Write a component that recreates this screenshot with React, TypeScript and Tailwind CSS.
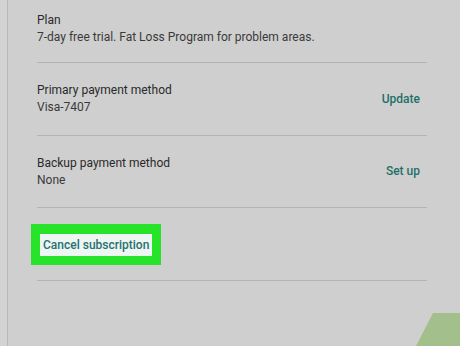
import React from "react";

function Row({
  label,
  value,
  action,
  className,
}: {
  label: string;
  value: string;
  action?: string;
  className: string;
}) {
  return (
    <div className={`flex items-center border-b border-[#b3b3b3] pr-[7px] ${className}`}>
      <div className="flex flex-1 flex-col text-[12px] leading-[17px]">
        <span className="text-[#2a2a2a]">{label}</span>
        <span className="text-[#3a3a3a]">{value}</span>
      </div>
      {action && (
        <span className="text-[12px] font-medium leading-[17px] text-[#1f6f69]">{action}</span>
      )}
    </div>
  );
}

export default function App() {
  return (
    <div
      className="relative flex h-[346px] w-[460px] overflow-hidden bg-[#cfcfcf]"
      style={{ fontFamily: "Roboto, 'Liberation Sans', sans-serif" }}
    >
      <div className="h-full w-[8px] border-r border-[#b9b9b9] bg-[#d3d3d3]" />
      <div className="flex w-[419px] flex-col pl-[29px]">
        <Row
          label="Plan"
          value="7-day free trial. Fat Loss Program for problem areas."
          className="h-[63px] pb-[4px]"
        />
        <Row label="Primary payment method" value="Visa-7407" action="Update" className="h-[73px]" />
        <Row label="Backup payment method" value="None" action="Set up" className="h-[72px]" />
        <div className="flex h-[73px] items-center border-b border-[#b3b3b3]">
          <div className="-ml-[6px] bg-[#27e42a] pb-[9px] pl-[9px] pr-[9px] pt-[10px]">
            <div className="bg-[#eef6f4] px-[3px] text-[12px] font-medium leading-[22px] text-[#26716f]">
              Cancel subscription
            </div>
          </div>
        </div>
      </div>
      <svg
        className="absolute bottom-0 right-0"
        width="44"
        height="34"
        viewBox="0 0 44 34"
      >
        <polygon points="0,34 17,1 44,1 44,34" fill="#a3bf8c" />
      </svg>
    </div>
  );
}
